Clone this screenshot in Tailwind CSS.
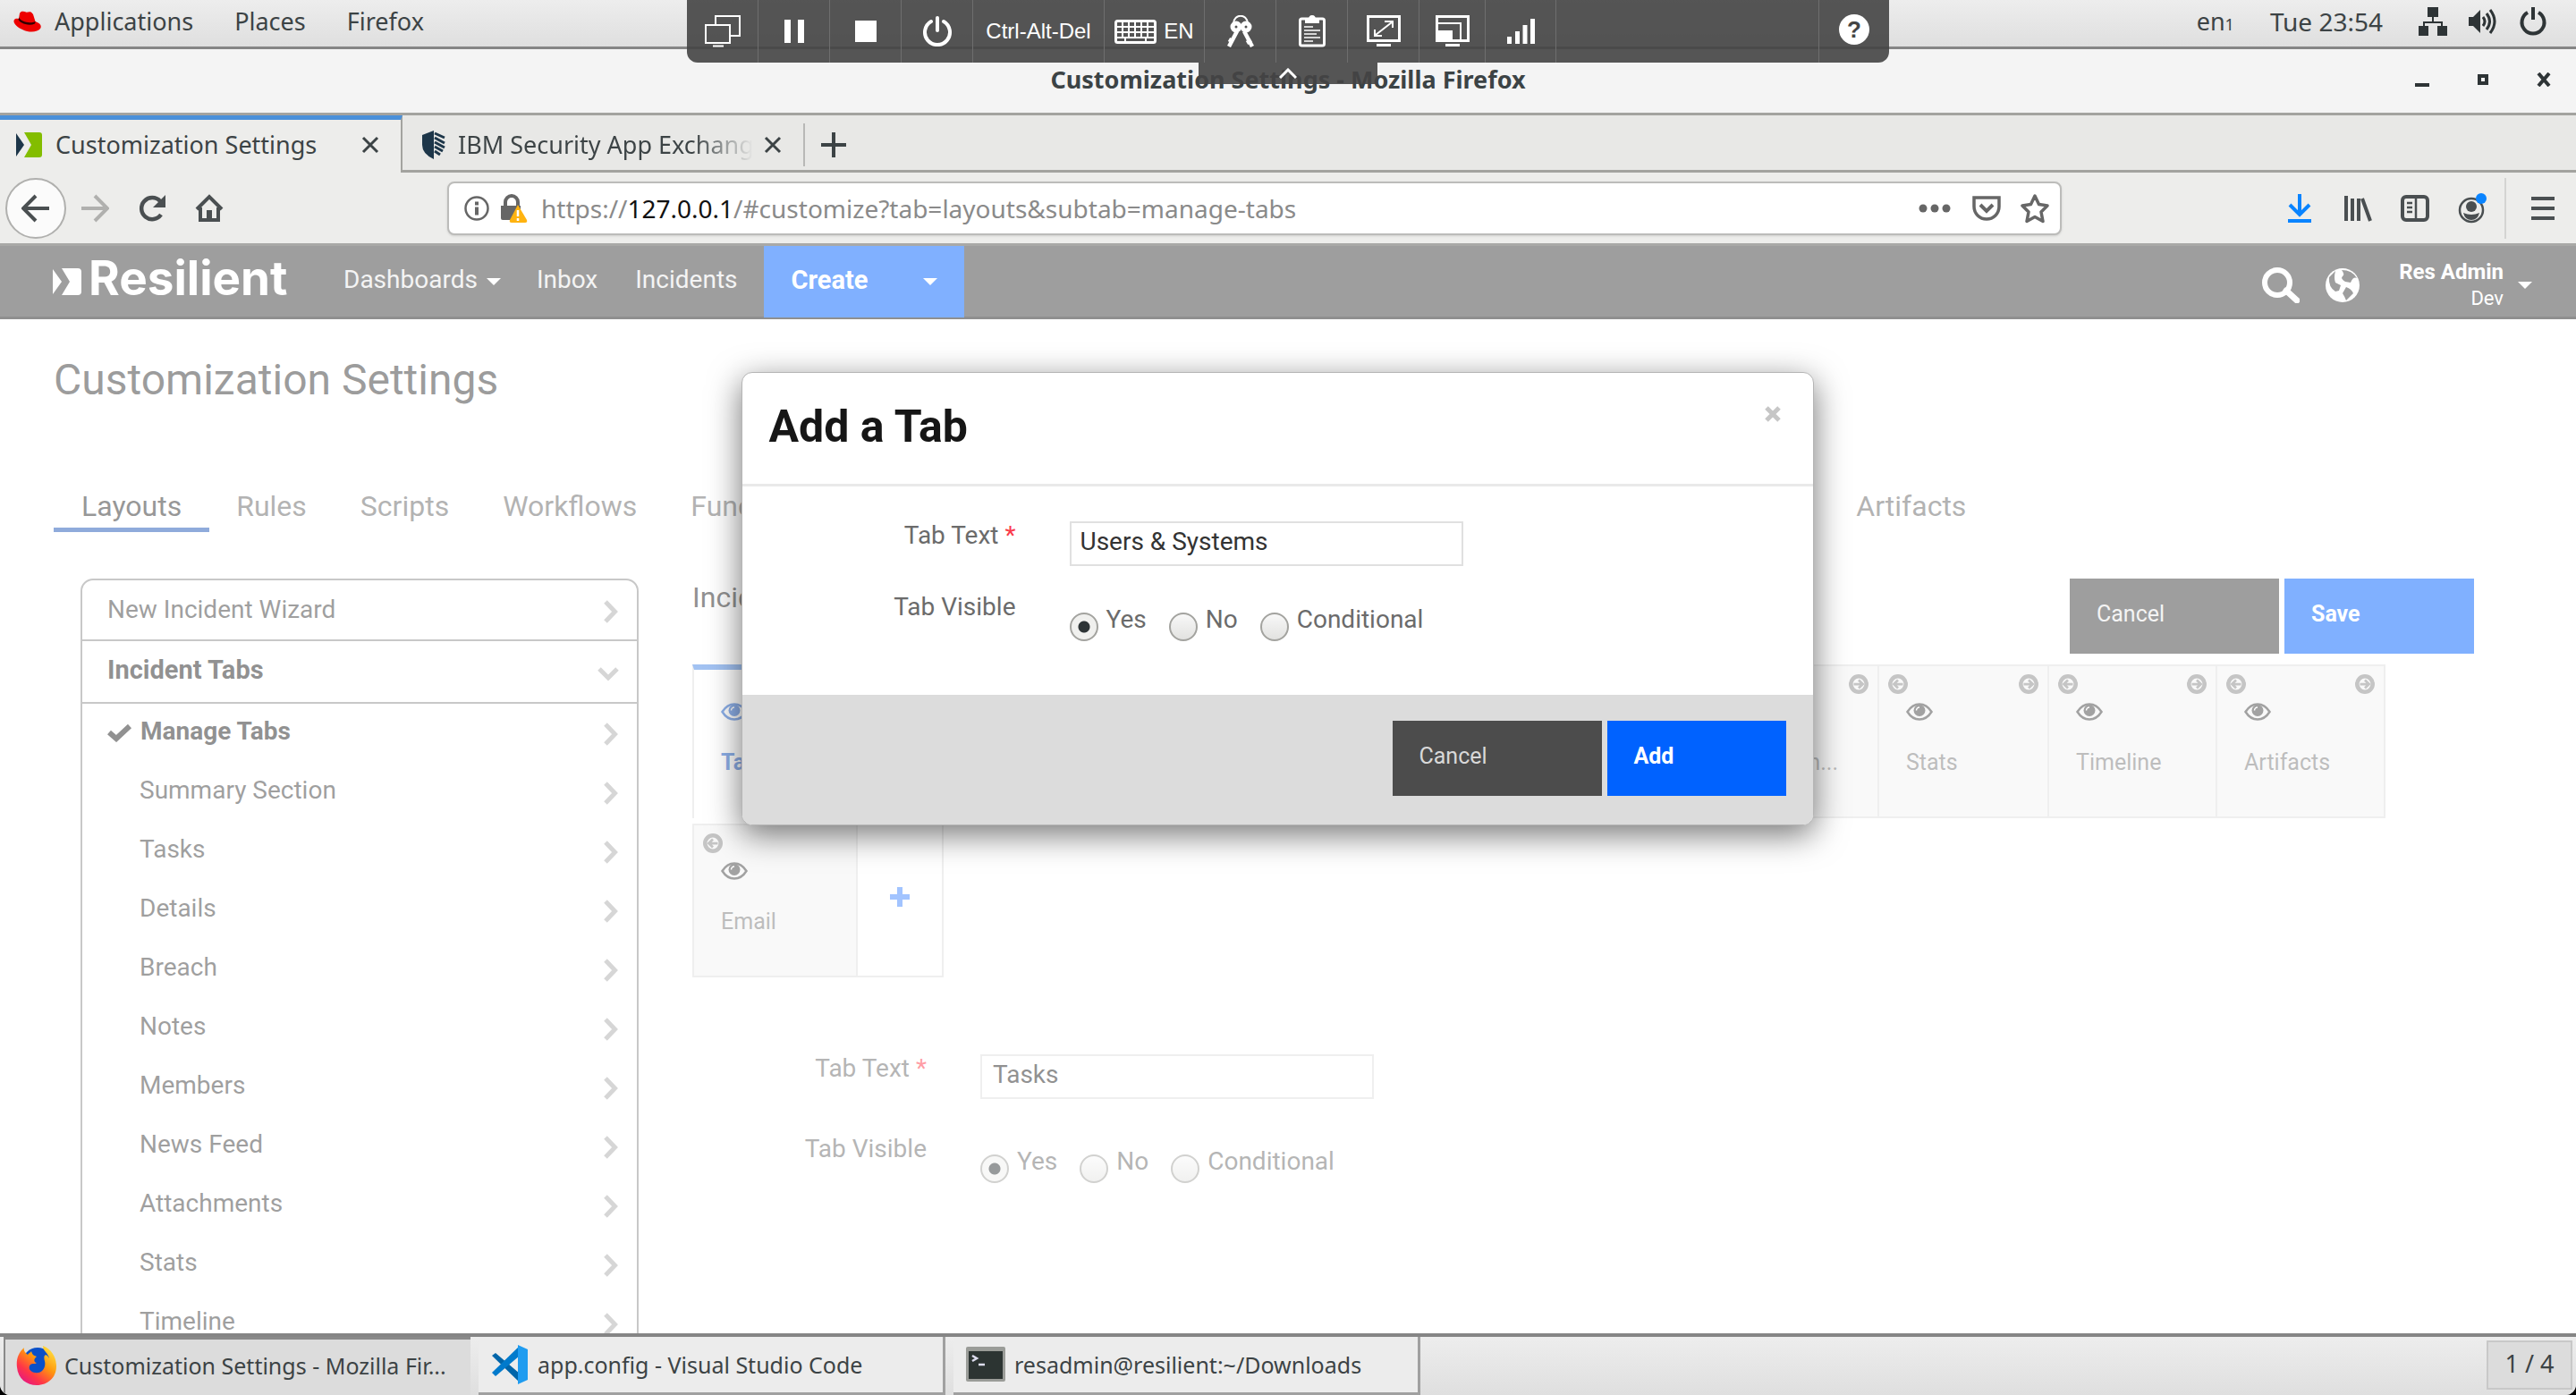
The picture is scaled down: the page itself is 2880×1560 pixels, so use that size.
<!DOCTYPE html>
<html lang="en">
<head>
<meta charset="utf-8">
<title>Customization Settings - Mozilla Firefox</title>
<script src="https://cdn.jsdelivr.net/npm/@tailwindcss/browser@4"></script>
</head>
<body class="bg-black">
<svg class="hidden" aria-hidden="true">
  <symbol id="chev" viewBox="0 0 18 26"><path d="M3 2l10.500 11L3 24" fill="none" stroke="currentColor" stroke-width="5"/></symbol>
  <symbol id="left" viewBox="0 0 24 24"><circle cx="12" cy="12" r="9.500" fill="none" stroke="currentColor" stroke-width="5"/><path d="M18 12H8M12 7l-5 5 5 5" fill="none" stroke="currentColor" stroke-width="3"/></symbol>
  <symbol id="right" viewBox="0 0 24 24"><circle cx="12" cy="12" r="9.500" fill="none" stroke="currentColor" stroke-width="5"/><path d="M6 12h10M12 7l5 5-5 5" fill="none" stroke="currentColor" stroke-width="3"/></symbol>
  <symbol id="eye" viewBox="0 0 30 20"><path d="M1.500 10C5 4.500 9.500 1.500 15 1.500S25 4.500 28.500 10C25 15.500 20.500 18.500 15 18.500S5 15.500 1.500 10z" fill="none" stroke="currentColor" stroke-width="2.500"/><circle cx="15" cy="8.500" r="6.500" fill="currentColor"/><path d="M11.500 8.500A3.500 3.500 0 0115 5" fill="none" stroke="#fff" stroke-width="1.500"/></symbol>
  <symbol id="caret" viewBox="0 0 16 8"><path d="M0 0h16L8 8z" fill="currentColor"/></symbol>
  <symbol id="cross" viewBox="0 0 20 20"><path d="M2 2l16 16M18 2L2 18" fill="none" stroke="currentColor" stroke-width="3"/></symbol>
</svg>

<div class="relative flex h-screen flex-col overflow-hidden rounded-b-xl bg-[#ededeb] font-['Noto_Sans',sans-serif] text-[27px] leading-9 text-[#3c4345]">

  <!-- Desktop panel -->
  <header class="flex h-[55px] shrink-0 items-center border-b-3 border-[#858585] bg-linear-to-b from-[#ededed] to-[#dfdfdf] pb-1 pl-[15px] pr-8">
    <svg class="mr-3.5 h-6 w-8" viewBox="0 0 32 24"><path d="M7 3c1-3 5-2.500 7-1.500S19-1 22 4l2.500 8C30 14 32 17 30 20c-3 4-12 5-20 1C3 18-1 13 1 10c1-1.500 3-1.500 5-1z" fill="#e00"/><path d="M5.500 9.500C6 13 16 18 24 14.500l.7-2.500C18 15 8 12 6.300 7.500z" fill="#300"/></svg>
    <nav class="flex gap-[46px]">
      <a href="#">Applications</a><a href="#">Places</a><a href="#">Firefox</a>
    </nav>
    <div class="ml-auto flex items-center">
      <span class="mr-10">en<span class="text-lg">1</span></span>
      <time class="mr-10 text-[28px]">Tue 23:54</time>
      <svg class="mr-6 h-8 w-8" viewBox="0 0 32 32" fill="#2e3436"><path d="M10 0h12v11h-5v5h10v5h5v11H21V21h4v-3H7v3h4v11H0V21h5v-5h10v-5h-5z"/></svg>
      <svg class="mr-6 h-8 w-8" viewBox="0 0 32 32"><path d="M0 11h5l8-8v26l-8-8H0z" fill="#2e3436"/><path d="M16 11q4 5 0 10M20 7q7 9 0 18M24 3q10 13 0 26" fill="none" stroke="#2e3436" stroke-width="3"/></svg>
      <svg class="h-8 w-8" viewBox="0 0 32 32" fill="none" stroke="#2e3436" stroke-width="4"><path d="M10 6a12.500 12.500 0 1012 0M16 0v14"/></svg>
    </div>
  </header>

  <!-- Window title bar -->
  <div class="flex h-[74px] shrink-0 items-center border-b-3 border-[#a3a39f] bg-[#f4f4f4] px-7 pb-1">
    <div class="flex-1"></div>
    <h1 class="font-bold">Customization Settings - Mozilla Firefox</h1>
    <div class="flex flex-1 items-center justify-end gap-[54px] text-[#2e3436]">
      <button aria-label="Minimize"><svg class="h-4 w-4" viewBox="0 0 16 16"><path d="M0 12h16v4H0z" fill="currentColor"/></svg></button>
      <button aria-label="Maximize"><svg class="h-3 w-3" viewBox="0 0 12 12"><path d="M2 2h8v8H2z" fill="none" stroke="currentColor" stroke-width="4"/></svg></button>
      <button aria-label="Close"><svg class="h-4 w-4" viewBox="0 0 16 16"><path d="M2 1l12 14M14 1L2 15" stroke="currentColor" stroke-width="4"/></svg></button>
    </div>
  </div>

  <!-- Browser tabs -->
  <div class="flex h-16 shrink-0 bg-[#e8e8e6]">
    <div class="flex w-[450px] items-center border-t-5 border-r-2 border-t-[#4a90d9] border-r-[#a3a39f] bg-[#ededeb] pb-1 pl-[18px] pr-6">
      <svg class="mr-3.5 h-7 w-[30px]" viewBox="0 0 30 28"><path d="M0 1l9 13-9 13z" fill="#1d3649"/><path d="M9 0h17q3 0 3 3v22q0 3-3 3H9l8-14z" fill="#83bd00"/></svg>
      <span>Customization Settings</span>
      <button class="ml-auto" aria-label="Close tab"><svg class="h-5 w-5"><use href="#cross"/></svg></button>
    </div>
    <div class="flex flex-1 items-center border-b-3 border-[#a3a39f] pl-[22px] pt-1">
      <svg class="mr-3.5 h-8 w-[26px]" viewBox="0 0 26 32"><path d="M13 0v32Q0 26 0 16V5z" fill="#1d3649"/><path d="M14 3l11 5M14 8l11 6M14 13l11 6M14 18l9 5M14 23l6 4" stroke="#1d3649" stroke-width="3"/></svg>
      <span class="w-[330px] overflow-hidden bg-linear-to-r from-[#3c4345] from-80% to-transparent bg-clip-text whitespace-nowrap text-transparent">IBM Security App Exchang</span>
      <button class="ml-3 mr-6" aria-label="Close tab"><svg class="h-5 w-5"><use href="#cross"/></svg></button>
      <span class="h-12 w-0.5 bg-[#b8b8b6]"></span>
      <button class="ml-[18px]" aria-label="New tab"><svg class="h-7 w-7" viewBox="0 0 28 28"><path d="M14 0v28M0 14h28" stroke="#3c4345" stroke-width="4"/></svg></button>
    </div>
  </div>

  <!-- Navigation bar -->
  <div class="flex h-[82px] shrink-0 items-center border-b-3 border-[#a9a9a7] pl-[6px] pr-6 text-[#4a4f51]">
    <button class="flex h-[68px] w-[68px] items-center justify-center rounded-full border-2 border-[#b0b0ae] bg-[#fbfbfb]" aria-label="Back"><svg class="h-8 w-8" viewBox="0 0 32 32" fill="none" stroke="currentColor" stroke-width="4"><path d="M31 16H3M16 2L2 16l14 14"/></svg></button>
    <button class="ml-4 text-[#b0b0ae]" aria-label="Forward"><svg class="h-8 w-8" viewBox="0 0 32 32" fill="none" stroke="currentColor" stroke-width="4"><path d="M1 16h28M16 2l14 14-14 14"/></svg></button>
    <button class="ml-8" aria-label="Reload"><svg class="h-8 w-8" viewBox="0 0 32 32"><path d="M26 23A12 12 0 1125 8" fill="none" stroke="currentColor" stroke-width="4.500"/><path d="M31 1v14H17z" fill="currentColor"/></svg></button>
    <button class="ml-8" aria-label="Home"><svg class="h-8 w-8" viewBox="0 0 32 32"><path d="M2 17L16 3l14 14M6 15v14h20V15" fill="none" stroke="currentColor" stroke-width="4"/><path d="M13 18h6v11h-6z" fill="currentColor"/></svg></button>
    <div class="ml-[250px] flex h-[60px] w-[1805px] items-center rounded-lg border-2 border-[#bcbcba] bg-white pl-[17px] pr-2.5 shadow-sm">
      <svg class="h-7 w-7" viewBox="0 0 28 28"><circle cx="14" cy="14" r="12.500" fill="none" stroke="#666" stroke-width="2.500"/><path d="M12 6.500h4v4h-4zM12 12.500h4v9h-4z" fill="#666"/></svg>
      <svg class="ml-3 mr-3.5 h-8 w-8" viewBox="0 0 32 32"><path d="M6 14V9a7 7 0 0114 0v5" fill="none" stroke="#666" stroke-width="4"/><path d="M1 13h22v14q0 2-2 2H3q-2 0-2-2z" fill="#666"/><path d="M20 12l10 17q1 3-2 3H13q-3 0-2-3z" fill="#ffb310"/><path d="M20 18v7M20 27v3" stroke="#fff" stroke-width="2.500"/></svg>
      <div class="min-w-0 flex-1 text-[28px] text-[#8a8a8a]" role="textbox" aria-label="Address" tabindex="0">https://<span class="text-[#111]">127.0.0.1</span>/#customize?tab=layouts&amp;subtab=manage-tabs</div>
      <svg class="mr-6 h-2.5 w-9" viewBox="0 0 36 10" fill="#666"><circle cx="5" cy="5" r="4.500"/><circle cx="18" cy="5" r="4.500"/><circle cx="31" cy="5" r="4.500"/></svg>
      <svg class="mr-5 h-8 w-8" viewBox="0 0 32 32" fill="none" stroke="#666" stroke-width="3.500"><path d="M2 4h28v10a14 14 0 01-28 0z"/><path d="M9 12l7 7 7-7" stroke-width="4"/></svg>
      <svg class="h-9 w-9" viewBox="0 0 36 36"><path d="M18 4l4.500 9.500L32 15l-7 7 2 10.500-9-5-9 5L11 22l-7-7 9.500-1.500z" fill="none" stroke="#666" stroke-width="3.500" stroke-linejoin="round"/></svg>
    </div>
    <div class="ml-auto flex items-center">
      <svg class="mr-9 h-8 w-[26px]" viewBox="0 0 26 32" fill="none" stroke="#0a84ff" stroke-width="4"><path d="M13 0v22M2 12l11 11 11-11M0 30h26"/></svg>
      <svg class="mr-8 h-8 w-8" viewBox="0 0 32 32" fill="none" stroke="currentColor" stroke-width="4"><path d="M3 2v28M10 5v25M17 5v25M21 5l9 25"/></svg>
      <svg class="mr-8 h-8 w-8" viewBox="0 0 32 32" fill="none" stroke="currentColor" stroke-width="4"><rect x="2" y="3" width="28" height="26" rx="4"/><path d="M17 3v26" stroke-width="2.500"/><path d="M7 10h6M7 15h6M7 20h6" stroke-width="2.500"/></svg>
      <svg class="mr-5 h-9 w-8" viewBox="0 0 32 36"><circle cx="15" cy="20" r="13" fill="none" stroke="currentColor" stroke-width="2.500"/><circle cx="15" cy="16" r="6" fill="currentColor"/><path d="M6 23q9 4 18 0-2 8-9 8t-9-8z" fill="currentColor"/><circle cx="26" cy="7" r="6" fill="#0a84ff"/></svg>
      <span class="mr-7 h-[68px] w-0.5 bg-[#d4d4d2]"></span>
      <button aria-label="Menu"><svg class="h-7 w-[26px]" viewBox="0 0 26 28"><path d="M0 3h26M0 14h26M0 25h26" stroke="currentColor" stroke-width="4"/></svg></button>
    </div>
  </div>

  <!-- Web application -->
  <main class="relative min-h-0 flex-1 overflow-hidden bg-white font-['Roboto',sans-serif] text-[28px] leading-8 text-[#3f3f3f]">
    <div class="flex h-[82px] items-center border-b-3 border-[#1f1f1f] bg-[#3d3d3d] pl-[59px] pr-[49px] text-[28px] text-white">
      <svg class="h-[30px] w-8" viewBox="0 0 32 30"><path d="M0 1l10 14L0 29z" fill="#fff"/><path d="M10 0h18q4 0 4 4v22q0 4-4 4H10l9-15z" fill="#fff"/></svg>
      <span class="ml-2 w-[222px] pb-2 font-['Inter',sans-serif] text-[53px] font-bold leading-[60px]">Resilient</span>
      <nav class="ml-[63px] flex items-center pb-1 text-[#e8e8e8]">
        <a href="#" class="mr-10 flex items-center gap-2.5">Dashboards<svg class="mt-1 h-2 w-4 text-white"><use href="#caret"/></svg></a>
        <a href="#" class="mr-[42px]">Inbox</a>
        <a href="#">Incidents</a>
      </nav>
      <button class="ml-[29px] flex h-[80px] w-56 items-center justify-between bg-[#0061ff] pb-1 pl-[31px] pr-[30px] text-[29px] font-bold">Create<svg class="mt-1 h-2 w-4"><use href="#caret"/></svg></button>
      <div class="ml-auto flex items-center pt-2">
        <button aria-label="Search"><svg class="h-10 w-[42px]" viewBox="0 0 42 40" fill="none" stroke="#fff"><circle cx="17" cy="17" r="14" stroke-width="6"/><path d="M27 26l12 11" stroke-width="7" stroke-linecap="round"/></svg></button>
        <button class="ml-7" aria-label="Language"><svg class="h-10 w-10" viewBox="0 0 40 40"><circle cx="20" cy="20" r="19" fill="#fff"/><path d="M12 4q-2 8 0 13l6 3-2 6-4 1Q4 22 5 11zM19 3q4 5 1 7t3 6l6 1q3-7 7-5-5-9-17-9zM24 22q6 2 8 7l-8 8q-2-5-4-8z" fill="#3d3d3d"/></svg></button>
        <button class="ml-[43px] flex items-center gap-4 text-right">
          <span class="flex flex-col leading-[30px]"><span class="text-2xl/[30px] font-bold">Res Admin</span><span class="text-[22px]">Dev</span></span>
          <svg class="h-2 w-4"><use href="#caret"/></svg>
        </button>
      </div>
    </div>

    <h2 class="ml-[60px] mt-10 text-5xl leading-14 text-[#383838]">Customization Settings</h2>

    <nav class="ml-[60px] mt-[93px] flex text-[32px] leading-10 text-[#666]">
      <a href="#" class="border-b-5 border-[#1f57b7] px-[31px] pb-1 text-[#2f2f2f]">Layouts</a>
      <a href="#" class="px-[30px]">Rules</a>
      <a href="#" class="px-[30px]">Scripts</a>
      <a href="#" class="px-[30px]">Workflows</a>
      <div class="flex w-[1303px] justify-between">
        <a href="#" class="px-[30px]">Functions</a>
        <a href="#" class="px-[30px]">Message Destinations</a>
        <a href="#" class="px-[30px]">Phases &amp; Tasks</a>
        <a href="#" class="px-[30px]">Incident Types</a>
        <a href="#" class="px-[30px]">Breach</a>
      </div>
      <a href="#" class="px-[30px]">Artifacts</a>
    </nav>

    <div class="mt-[52px] flex items-start pl-[90px] pr-[114px]">
      <!-- Layout list -->
      <aside class="w-[624px] shrink-0 rounded-t-[14px] border-2 border-[#919191]">
        <a href="#" class="flex h-[68px] items-center justify-between border-b-2 border-[#919191] pl-7 pr-5">New Incident Wizard<svg class="mt-1 h-[26px] w-[18px] text-[#adadad]"><use href="#chev"/></svg></a>
        <a href="#" class="flex h-[70px] items-center justify-between border-b-2 border-[#919191] pb-1 pl-7 pr-5 text-[29px] font-bold text-[#222]">Incident Tabs<svg class="mt-2.5 h-[18px] w-6 text-[#adadad]" viewBox="0 0 24 18"><path d="M2 3l10 10L22 3" fill="none" stroke="currentColor" stroke-width="5"/></svg></a>
        <ul class="pl-7 pr-5">
          <li class="flex h-[66px] items-center font-bold text-[#222]"><svg class="mr-2.5 h-5 w-[27px]" viewBox="0 0 27 20"><path d="M2 9l8 7L25 2" fill="none" stroke="currentColor" stroke-width="6"/></svg><a href="#" class="flex-1 pb-1">Manage Tabs</a><svg class="mt-0.5 h-[26px] w-[18px] text-[#adadad]"><use href="#chev"/></svg></li>
          <li class="flex h-[66px] items-center pl-9"><a href="#" class="flex-1 pb-1">Summary Section</a><svg class="mt-0.5 h-[26px] w-[18px] text-[#adadad]"><use href="#chev"/></svg></li>
          <li class="flex h-[66px] items-center pl-9"><a href="#" class="flex-1 pb-1">Tasks</a><svg class="mt-0.5 h-[26px] w-[18px] text-[#adadad]"><use href="#chev"/></svg></li>
          <li class="flex h-[66px] items-center pl-9"><a href="#" class="flex-1 pb-1">Details</a><svg class="mt-0.5 h-[26px] w-[18px] text-[#adadad]"><use href="#chev"/></svg></li>
          <li class="flex h-[66px] items-center pl-9"><a href="#" class="flex-1 pb-1">Breach</a><svg class="mt-0.5 h-[26px] w-[18px] text-[#adadad]"><use href="#chev"/></svg></li>
          <li class="flex h-[66px] items-center pl-9"><a href="#" class="flex-1 pb-1">Notes</a><svg class="mt-0.5 h-[26px] w-[18px] text-[#adadad]"><use href="#chev"/></svg></li>
          <li class="flex h-[66px] items-center pl-9"><a href="#" class="flex-1 pb-1">Members</a><svg class="mt-0.5 h-[26px] w-[18px] text-[#adadad]"><use href="#chev"/></svg></li>
          <li class="flex h-[66px] items-center pl-9"><a href="#" class="flex-1 pb-1">News Feed</a><svg class="mt-0.5 h-[26px] w-[18px] text-[#adadad]"><use href="#chev"/></svg></li>
          <li class="flex h-[66px] items-center pl-9"><a href="#" class="flex-1 pb-1">Attachments</a><svg class="mt-0.5 h-[26px] w-[18px] text-[#adadad]"><use href="#chev"/></svg></li>
          <li class="flex h-[66px] items-center pl-9"><a href="#" class="flex-1 pb-1">Stats</a><svg class="mt-0.5 h-[26px] w-[18px] text-[#adadad]"><use href="#chev"/></svg></li>
          <li class="flex h-[66px] items-center pl-9"><a href="#" class="flex-1 pb-1">Timeline</a><svg class="mt-0.5 h-[26px] w-[18px] text-[#adadad]"><use href="#chev"/></svg></li>
        </ul>
      </aside>

      <!-- Tab editor -->
      <section class="ml-[60px] min-w-0 flex-1">
        <div class="mb-3 flex justify-between">
          <h3 class="text-[32px] leading-[42px] text-[#222]">Incident Tabs</h3>
          <div class="flex gap-1.5 text-[25px]">
            <button class="h-[84px] w-[234px] bg-[#3d3d3d] pb-1 pl-[30px] text-left text-[#e8e8e8]">Cancel</button>
            <button class="h-[84px] w-[212px] bg-[#0061ff] pb-1 pl-[30px] text-left font-bold text-white">Save</button>
          </div>
        </div>

        <div class="flex flex-wrap gap-y-1.5 text-[25px] text-[#7a7a7a]">
          <div class="h-[172px] w-[189px] border-t-6 border-l-2 border-t-[#4585e5] border-l-[#dfdfdf] px-2.5 pt-[5px] text-[#1a5fd0]">
            <div class="flex h-[22px] justify-end text-[#8a8a8a]"><svg class="h-[22px] w-[22px]"><use href="#right"/></svg></div>
            <svg class="ml-5 mt-2.5 h-5 w-[30px]"><use href="#eye"/></svg>
            <p class="ml-5 mt-[31px] font-bold">Tasks</p>
          </div>
          <div class="h-[172px] w-[189px] border-y-2 border-l-2 border-[#dfdfdf] bg-[#f3f3f3]"></div>
          <div class="h-[172px] w-[189px] border-y-2 border-l-2 border-[#dfdfdf] bg-[#f3f3f3]"></div>
          <div class="h-[172px] w-[189px] border-y-2 border-l-2 border-[#dfdfdf] bg-[#f3f3f3]"></div>
          <div class="h-[172px] w-[189px] border-y-2 border-l-2 border-[#dfdfdf] bg-[#f3f3f3]"></div>
          <div class="h-[172px] w-[190px] border-y-2 border-l-2 border-[#dfdfdf] bg-[#f3f3f3]"></div>
          <div class="h-[172px] w-[190px] border-y-2 border-l-2 border-[#dfdfdf] bg-[#f3f3f3] px-2.5 pt-[9px]">
            <div class="flex h-[22px] justify-between text-[#8a8a8a]"><svg class="h-[22px] w-[22px]"><use href="#left"/></svg><svg class="h-[22px] w-[22px]"><use href="#right"/></svg></div>
            <svg class="ml-5 mt-2.5 h-5 w-[30px] text-[#444]"><use href="#eye"/></svg>
            <p class="mr-[34px] mt-[31px] text-right">Attachm...</p>
          </div>
          <div class="h-[172px] w-[190px] border-y-2 border-l-2 border-[#dfdfdf] bg-[#f3f3f3] px-2.5 pt-[9px]">
            <div class="flex h-[22px] justify-between text-[#8a8a8a]"><svg class="h-[22px] w-[22px]"><use href="#left"/></svg><svg class="h-[22px] w-[22px]"><use href="#right"/></svg></div>
            <svg class="ml-5 mt-2.5 h-5 w-[30px] text-[#444]"><use href="#eye"/></svg>
            <p class="ml-5 mt-[31px]">Stats</p>
          </div>
          <div class="h-[172px] w-[188px] border-y-2 border-l-2 border-[#dfdfdf] bg-[#f3f3f3] px-2.5 pt-[9px]">
            <div class="flex h-[22px] justify-between text-[#8a8a8a]"><svg class="h-[22px] w-[22px]"><use href="#left"/></svg><svg class="h-[22px] w-[22px]"><use href="#right"/></svg></div>
            <svg class="ml-5 mt-2.5 h-5 w-[30px] text-[#444]"><use href="#eye"/></svg>
            <p class="ml-5 mt-[31px]">Timeline</p>
          </div>
          <div class="h-[172px] w-[190px] border-2 border-[#dfdfdf] bg-[#f3f3f3] px-2.5 pt-[9px]">
            <div class="flex h-[22px] justify-between text-[#8a8a8a]"><svg class="h-[22px] w-[22px]"><use href="#left"/></svg><svg class="h-[22px] w-[22px]"><use href="#right"/></svg></div>
            <svg class="ml-5 mt-2.5 h-5 w-[30px] text-[#444]"><use href="#eye"/></svg>
            <p class="ml-5 mt-[31px]">Artifacts</p>
          </div>
          <div class="h-[172px] w-[183px] border-y-2 border-l-2 border-[#dfdfdf] bg-[#f3f3f3] px-2.5 pt-[9px]">
            <div class="flex h-[22px] text-[#8a8a8a]"><svg class="h-[22px] w-[22px]"><use href="#left"/></svg></div>
            <svg class="ml-5 mt-2.5 h-5 w-[30px] text-[#444]"><use href="#eye"/></svg>
            <p class="ml-5 mt-[31px]">Email</p>
          </div>
          <button class="flex h-[172px] w-[98px] items-center justify-center border-2 border-[#dfdfdf] pb-2" aria-label="Add tab"><svg class="h-[22px] w-[22px]" viewBox="0 0 22 22"><path d="M11 0v22M0 11h22" stroke="#4589ff" stroke-width="6"/></svg></button>
        </div>

        <form class="mt-[86px] text-[#6b6b6b]">
          <div class="flex">
            <label for="page-text" class="w-[262px] text-right">Tab Text <span class="text-[#ff3b4b]">*</span></label>
            <input id="page-text" value="Tasks" class="ml-[60px] h-[50px] w-[440px] border-2 border-[#dfdfdf] bg-white pb-1.5 pl-3 text-[#222]">
          </div>
          <div class="mt-10 flex">
            <span class="w-[262px] text-right">Tab Visible</span>
            <div class="ml-[60px] flex gap-[25px] pt-3.5">
              <label class="flex gap-[9px]"><input type="radio" name="pv" checked class="mt-2 h-8 w-8 appearance-none rounded-full border-2 border-[#a3a39f] bg-linear-to-b from-[#f8f8f8] to-[#e2e2e0] checked:bg-[radial-gradient(circle,#2e3436_6px,#f0f0ee_7px)]">Yes</label>
              <label class="flex gap-[9px]"><input type="radio" name="pv" class="mt-2 h-8 w-8 appearance-none rounded-full border-2 border-[#a3a39f] bg-linear-to-b from-[#f8f8f8] to-[#e2e2e0]">No</label>
              <label class="flex gap-[9px]"><input type="radio" name="pv" class="mt-2 h-8 w-8 appearance-none rounded-full border-2 border-[#a3a39f] bg-linear-to-b from-[#f8f8f8] to-[#e2e2e0]">Conditional</label>
            </div>
          </div>
        </form>
      </section>
    </div>

    <!-- Dialog -->
    <div class="absolute inset-0 flex items-start justify-center bg-white/50 pr-6 pt-[141px]">
      <form role="dialog" aria-labelledby="dlg-title" class="w-[1199px] overflow-hidden rounded-xl border border-[#b5b5b5] bg-white text-[#6b6b6b] shadow-[0_10px_36px_rgba(0,0,0,0.55)]">
        <div class="flex h-[127px] items-center justify-between border-b-3 border-[#e9e9e9] pb-1 pl-[30px] pr-9">
          <h2 id="dlg-title" class="text-[50px] font-bold leading-14 text-[#161616]">Add a Tab</h2>
          <button type="button" class="mb-7 text-[#c6c6c6]" aria-label="Close"><svg class="h-[18px] w-[18px]" viewBox="0 0 18 18"><path d="M2 2l14 14M16 2L2 16" stroke="currentColor" stroke-width="5"/></svg></button>
        </div>
        <div class="pb-[60px] pt-[39px]">
          <div class="flex">
            <label for="dlg-text" class="w-[306px] text-right">Tab Text <span class="text-[#fa3b4b]">*</span></label>
            <input id="dlg-text" value="Users &amp; Systems" class="ml-[60px] h-[50px] w-[440px] border-2 border-[#e0e0e0] bg-white pb-1.5 pl-2.5 text-[#333]">
          </div>
          <div class="mt-[30px] flex">
            <span class="w-[306px] text-right">Tab Visible</span>
            <div class="ml-[60px] flex gap-[25px] pt-3.5">
              <label class="flex gap-[9px]"><input type="radio" name="dv" checked class="mt-2 h-8 w-8 appearance-none rounded-full border-2 border-[#a3a39f] bg-linear-to-b from-[#f8f8f8] to-[#e2e2e0] checked:bg-[radial-gradient(circle,#2e3436_6px,#f0f0ee_7px)]">Yes</label>
              <label class="flex gap-[9px]"><input type="radio" name="dv" class="mt-2 h-8 w-8 appearance-none rounded-full border-2 border-[#a3a39f] bg-linear-to-b from-[#f8f8f8] to-[#e2e2e0]">No</label>
              <label class="flex gap-[9px]"><input type="radio" name="dv" class="mt-2 h-8 w-8 appearance-none rounded-full border-2 border-[#a3a39f] bg-linear-to-b from-[#f8f8f8] to-[#e2e2e0]">Conditional</label>
            </div>
          </div>
        </div>
        <div class="flex justify-end gap-1.5 bg-[#dcdcdc] pb-8 pr-[30px] pt-[29px] text-[25px]">
          <button type="button" class="h-[84px] w-[234px] bg-[#4c4c4c] pb-1 pl-[30px] text-left text-[#d8d8d8]">Cancel</button>
          <button type="button" class="h-[84px] w-[200px] bg-[#0062ff] pb-1 pl-[30px] text-left font-bold text-white">Add</button>
        </div>
      </form>
    </div>
  </main>

  <!-- Window list -->
  <footer class="flex h-[69px] shrink-0 items-stretch border-t-4 border-[#858585] bg-linear-to-b from-[#ededed] to-[#dfdfdf] pl-1 pr-1 text-[25px]">
    <button class="flex w-[522px] items-center border-t-3 border-l-2 border-[#8a8a8a] bg-[#dcdcdc] pb-1 pl-3">
      <svg class="mr-2 h-[46px] w-[46px]" viewBox="0 0 46 46"><defs><linearGradient id="fx" x1="1" y1="0" x2="0.200" y2="1"><stop offset="0" stop-color="#fff44f"/><stop offset=".45" stop-color="#ff980e"/><stop offset=".75" stop-color="#ff3647"/><stop offset="1" stop-color="#e31587"/></linearGradient></defs><circle cx="24" cy="20" r="17" fill="#0a50c8"/><path d="M30 1c0 6 6 8 7 14-4-7-7-3-5 3 2 8-4 15-11 13-6-1-8-6-5-9 2-2 5 0 7-2-4-1-3-5 0-7-3-1-5-2-6-6-1 2-3 2-4 4-3-2-5-5-4-8-7 6-9 14-8 22 1 13 11 20 22 20 13 0 22-9 22-21C45 14 40 5 30 1z" fill="url(#fx)"/></svg>
      Customization Settings - Mozilla Fir...</button>
    <button class="ml-[9px] flex w-[522px] items-center border-r-3 border-b-3 border-[#a0a0a0] bg-[#ececec] pl-3">
      <svg class="mr-2.5 h-11 w-11" viewBox="0 0 44 44"><path d="M3 12l4-3 27 23v10z" fill="#0065a9"/><path d="M3 31l4 4 27-23V1z" fill="#007acc"/><path d="M32 0l11 5v34l-11 5z" fill="#1f9cf0"/></svg>
      app.config - Visual Studio Code</button>
    <button class="ml-[9px] flex w-[522px] items-center border-r-3 border-b-3 border-[#a0a0a0] bg-[#ececec] pl-3.5">
      <svg class="mr-2.5 h-10 w-11" viewBox="0 0 44 40"><rect width="44" height="39" rx="2" fill="#9a9c98"/><rect x="3" y="5" width="38" height="31" fill="#2c3432"/><path d="M7 10l5 3-5 3M14 20h7" fill="none" stroke="#dde" stroke-width="2.500"/></svg>
      resadmin@resilient:~/Downloads</button>
    <span class="mb-1.5 mt-1 ml-auto flex w-[96px] items-center justify-center border-2 border-[#c8c8c8] bg-[#dcdcdc] pb-1 text-[27px]">1 / 4</span>
  </footer>

  <!-- Console toolbar -->
  <div class="absolute left-1/2 top-0 -translate-x-1/2 text-white">
    <div class="flex h-[70px] w-[1344px] rounded-b-xl bg-[#444]/90 font-['Liberation_Sans',sans-serif] text-2xl [&>*]:flex [&>*]:items-center [&>*]:justify-center [&>*+*]:border-l [&>*+*]:border-[#6e6e6e]">
      <button class="w-[79px]" aria-label="Displays"><svg class="h-9 w-10" viewBox="0 0 40 36" fill="none" stroke="#fff" stroke-width="2"><path d="M12 10V1h27v22H29M1 11h27v20H1zM9 34.500h12"/></svg></button>
      <button class="w-[80px]" aria-label="Pause"><svg class="h-[26px] w-[22px]" viewBox="0 0 22 26"><path d="M0 0h7v26H0zM15 0h7v26h-7z" fill="#fff"/></svg></button>
      <button class="w-[80px]" aria-label="Stop"><svg class="h-6 w-6" viewBox="0 0 24 24"><path d="M0 0h24v24H0z" fill="#fff"/></svg></button>
      <button class="w-[80px]" aria-label="Power"><svg class="h-[34px] w-[34px]" viewBox="0 0 34 34" fill="none" stroke="#fff" stroke-width="4" stroke-linecap="round"><path d="M10 6a14 14 0 1014 0M17 2v14"/></svg></button>
      <button class="w-[147px]">Ctrl-Alt-Del</button>
      <button class="w-[112px] gap-2"><svg class="h-[27px] w-[47px]" viewBox="0 0 47 27" fill="none" stroke="#fff"><rect x="1.500" y="1.500" width="44" height="24" rx="2" stroke-width="3"/><path d="M2 8h43M2 14h43M2 20h43M9 2v18M16 2v18M23 2v18M30 2v18M37 2v18M12 20v5M35 20v5" stroke-width="2"/></svg>EN</button>
      <button class="w-[80px]" aria-label="Keys"><svg class="h-9 w-[34px]" viewBox="0 0 34 36" fill="none" stroke="#fff"><path d="M9 9C10-2 24-2 25 9" stroke-width="2"/><circle cx="12" cy="13" r="4" stroke-width="5"/><circle cx="23" cy="13" r="4" stroke-width="5"/><path d="M13 18L4 35M4 27l5 3M21 18l9 17M24 31l5-3" stroke-width="4.500"/></svg></button>
      <button class="w-[80px]" aria-label="Clipboard"><svg class="h-9 w-[30px]" viewBox="0 0 30 36" fill="none" stroke="#fff"><rect x="1.500" y="4" width="27" height="30" rx="2" stroke-width="3"/><path d="M7 9V5h4q0-5 4-5t4 5h4v4z" fill="#fff" stroke="none"/><path d="M6 13h10M6 17h18M6 21h14M6 25h18M6 29h10" stroke-width="1.500"/></svg></button>
      <button class="w-[80px]" aria-label="Full screen"><svg class="h-9 w-[38px]" viewBox="0 0 38 36" fill="none" stroke="#fff"><path d="M1.500 1.500h35v27h-35z" stroke-width="3"/><path d="M10 22L28 8M20 7h9v7M9 16v7h8" stroke-width="2"/><path d="M11 33.500h16" stroke-width="3"/></svg></button>
      <button class="w-[74px]" aria-label="Scale"><svg class="h-9 w-[38px]" viewBox="0 0 38 36" fill="none" stroke="#fff"><path d="M1.500 1.500h35v27h-35z" stroke-width="3"/><path d="M2 9h26v19" stroke-width="2"/><path d="M2 17h17v12H2z" fill="#fff" stroke="none"/><path d="M11 33.500h16" stroke-width="3"/></svg></button>
      <button class="w-[79px]" aria-label="Signal"><svg class="h-7 w-[31px]" viewBox="0 0 31 28"><path d="M0 20h5v8H0zM9 14h5v14H9zM17.500 7h5v21h-5zM26 0h5v28h-5z" fill="#fff"/></svg></button>
      <span class="w-[294px]"></span>
      <button class="w-[79px]" aria-label="Help"><span class="mb-1 flex h-[34px] w-[34px] items-center justify-center rounded-full bg-white text-[26px] font-bold text-[#444]">?</span></button>
    </div>
    <button class="mx-auto flex h-6 w-[200px] items-center justify-center bg-[#444]/90" aria-label="Collapse"><svg class="h-3 w-5" viewBox="0 0 20 12"><path d="M1 11l9-9 9 9" fill="none" stroke="#fff" stroke-width="3"/></svg></button>
  </div>
</div>
</body>
</html>
